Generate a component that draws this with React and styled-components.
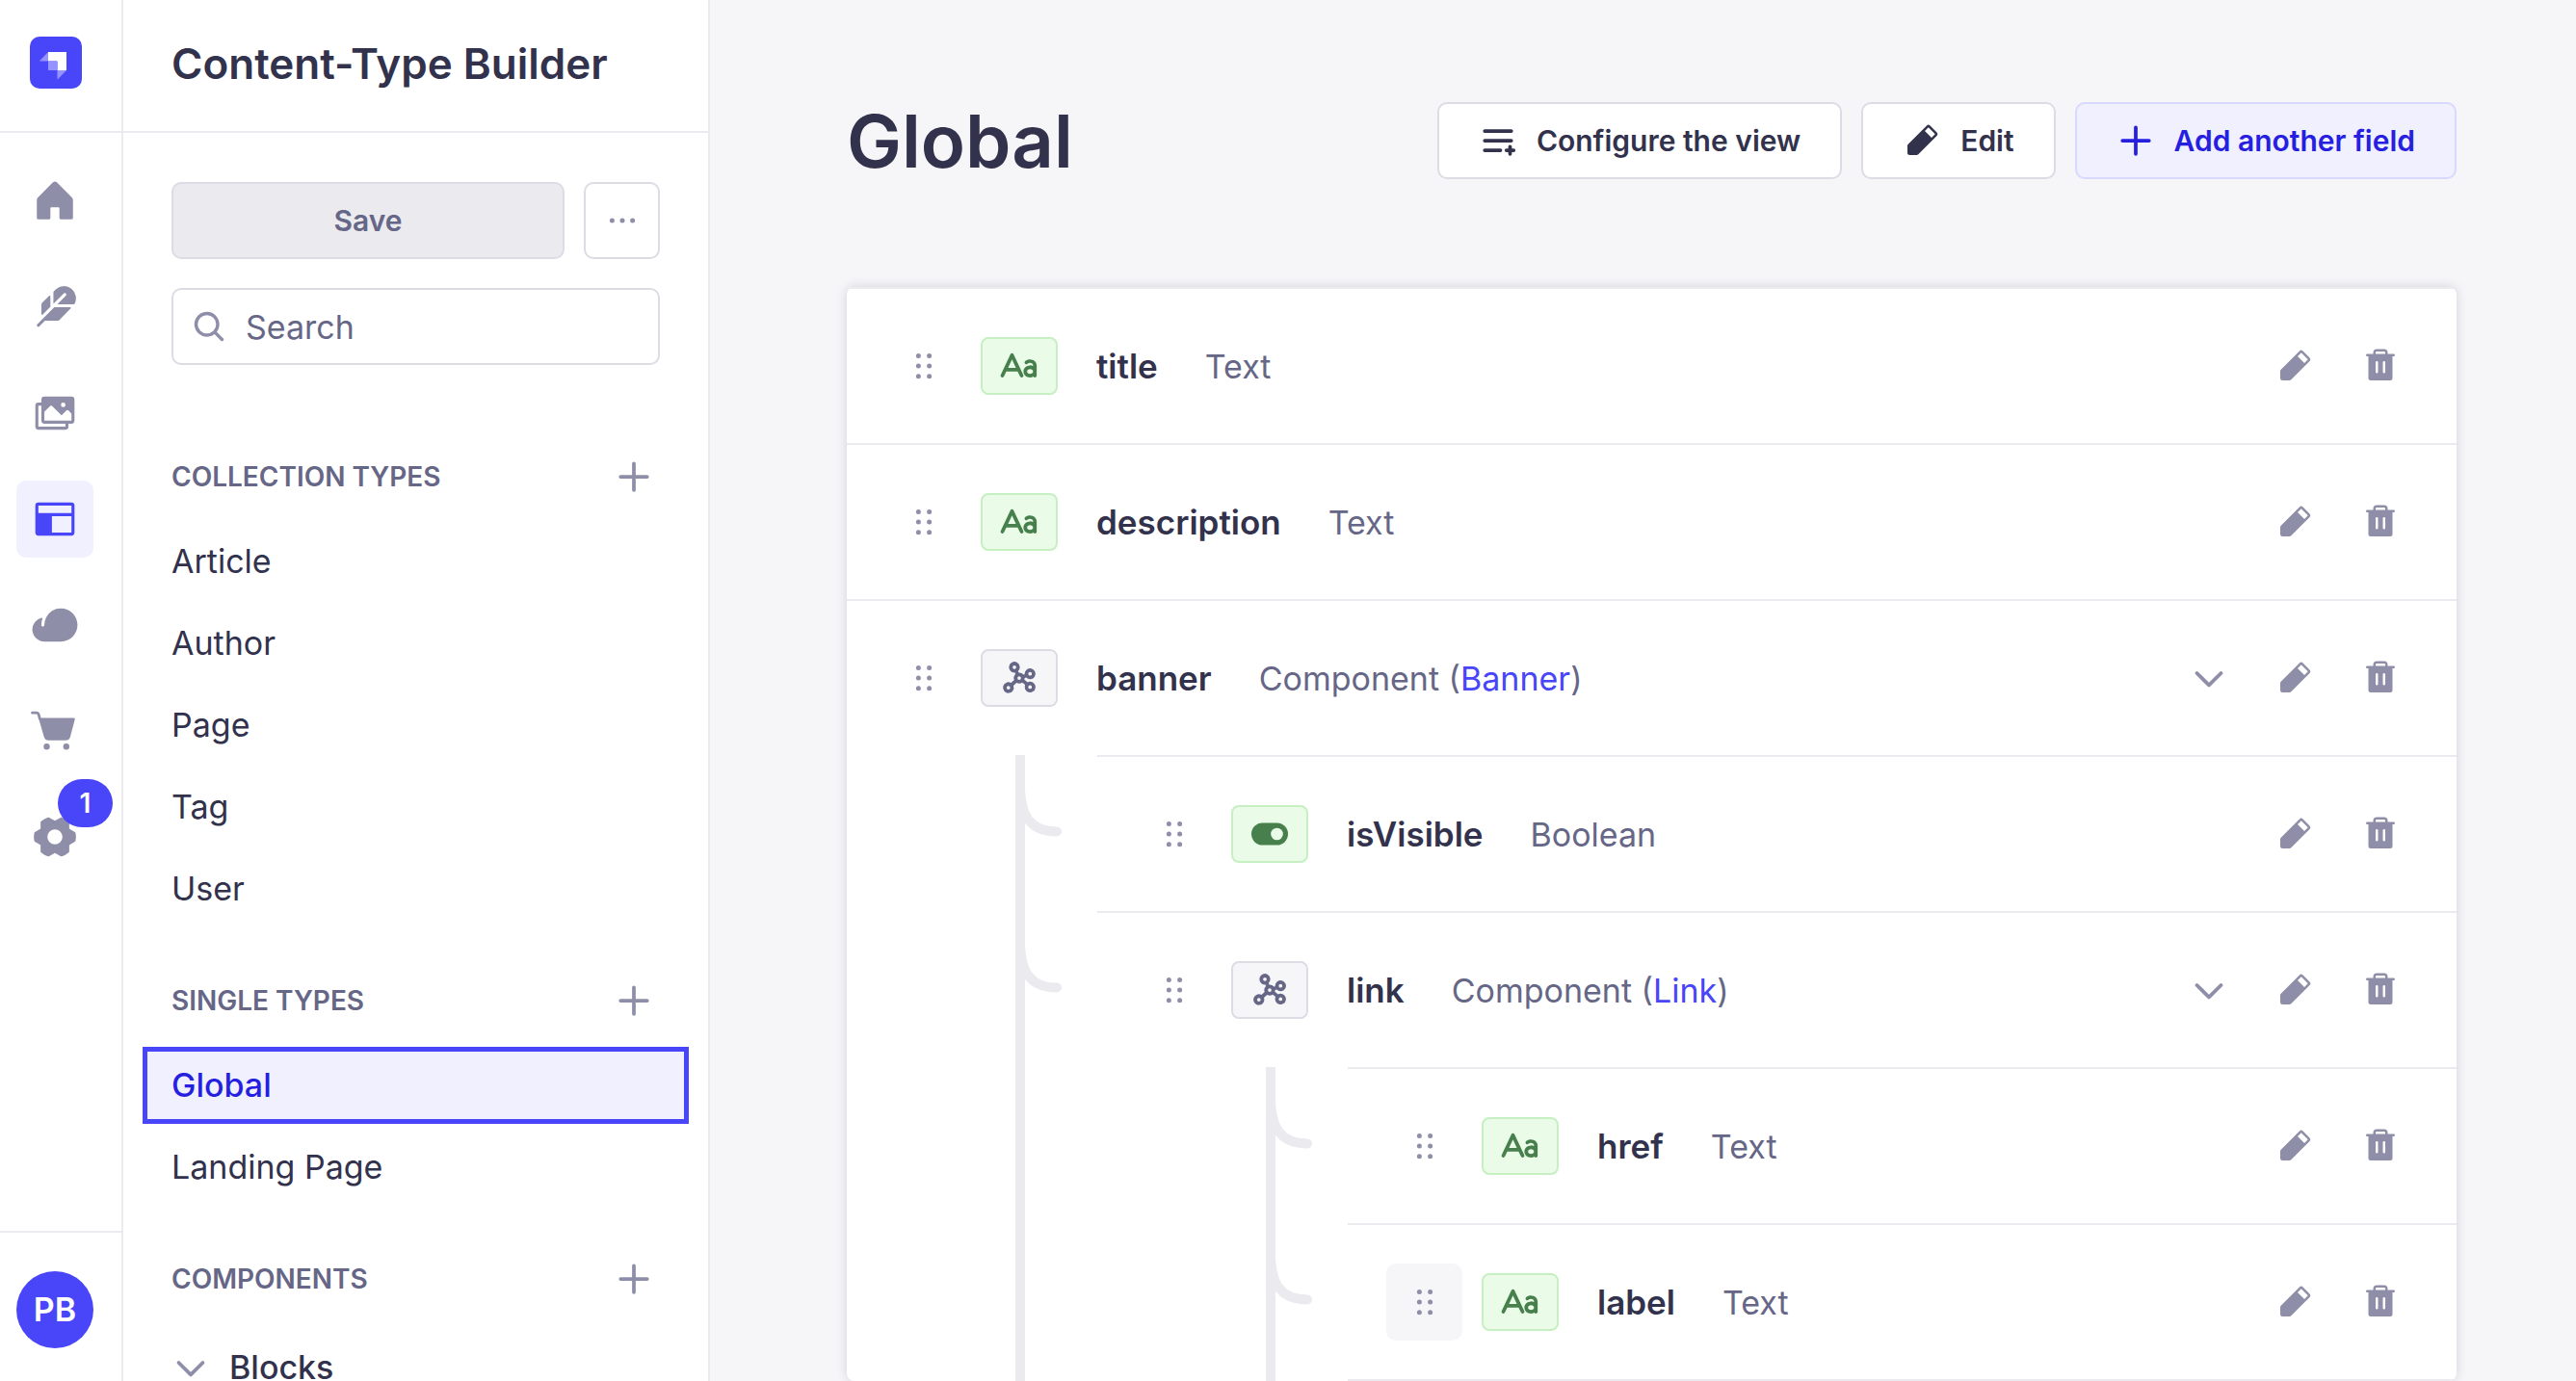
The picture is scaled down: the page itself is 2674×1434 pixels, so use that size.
import React from "react";
import styled, { createGlobalStyle, css } from "styled-components";
import {
  PiCaretDownBold,
  PiCloudFill,
  PiDotsSixVerticalBold,
  PiDotsThreeBold,
  PiFeatherFill,
  PiGearSixFill,
  PiGraphBold,
  PiHouseFill,
  PiImagesFill,
  PiLayoutFill,
  PiListPlusBold,
  PiMagnifyingGlassBold,
  PiPencilSimpleFill,
  PiPlusBold,
  PiTextAaBold,
  PiTrashFill,
} from "react-icons/pi";

const c = {
  white: "#ffffff",
  page: "#f6f6f9",
  line: "#eaeaef",
  outline: "#dcdce4",
  icon: "#8e8ea9",
  muted: "#666687",
  ink: "#32324d",
  primary: "#4945f8",
  primaryDark: "#271fe0",
  primarySoft: "#f0f0ff",
  primaryLine: "#d9d8ff",
  green: "#47804d",
  greenSoft: "#eafbe7",
  greenLine: "#c6f0c2",
};

const GlobalStyle = createGlobalStyle`
  *, *::before, *::after { box-sizing: border-box; }
  body {
    margin: 0;
    background: ${c.page};
    color: ${c.ink};
    font-family: Inter, "Liberation Sans", sans-serif;
    font-size: 34px;
    line-height: 50px;
    -webkit-font-smoothing: antialiased;
  }
  button, input { font: inherit; color: inherit; margin: 0; }
  button { padding: 0; border: 0; background: none; cursor: pointer; }
  a { color: inherit; text-decoration: none; }
  ul { list-style: none; margin: 0; padding: 0; }
  h1, h2, h3, p { margin: 0; }
  svg { display: block; flex: none; }
`;

const Shell = styled.div`
  display: flex;
  height: 100vh;
  overflow: hidden;
`;

/* ---------- Left rail ---------- */

const Rail = styled.nav`
  flex: none;
  width: 128px;
  display: flex;
  flex-direction: column;
  background: ${c.white};
  border-right: 2px solid ${c.line};
`;

const RailBrand = styled.a`
  display: flex;
  height: 138px;
  padding: 38px 0 0 31px;
  border-bottom: 2px solid ${c.line};
`;

const RailList = styled.ul`
  flex: 1;
  display: flex;
  flex-direction: column;
  gap: 30px;
  padding: 31px 0 0 17px;
`;

const RailLink = styled.a`
  position: relative;
  display: flex;
  align-items: center;
  justify-content: center;
  width: 80px;
  height: 80px;
  border-radius: 10px;
  font-size: 50px;
  color: ${(p) => (p.$active ? c.primary : c.icon)};
  background: ${(p) => (p.$active ? c.primarySoft : "transparent")};
`;

const Badge = styled.span`
  position: absolute;
  top: -20px;
  left: 43px;
  width: 57px;
  height: 50px;
  border-radius: 25px;
  background: ${c.primary};
  color: ${c.white};
  font-size: 28px;
  font-weight: 600;
  line-height: 50px;
  text-align: center;
`;

const RailFooter = styled.div`
  padding: 40px 0 34px 17px;
  border-top: 2px solid ${c.line};
`;

const Avatar = styled.button`
  display: block;
  width: 80px;
  height: 80px;
  border-radius: 50%;
  background: ${c.primary};
  color: ${c.white};
  font-weight: 600;
`;

/* ---------- Sidebar ---------- */

const Sidebar = styled.aside`
  flex: none;
  width: 609px;
  display: flex;
  flex-direction: column;
  overflow: hidden;
  background: ${c.white};
  border-right: 2px solid ${c.line};
`;

const SidebarHeader = styled.div`
  flex: none;
  display: flex;
  align-items: center;
  height: 138px;
  padding: 0 50px 4px;
  border-bottom: 2px solid ${c.line};
`;

const SidebarTitle = styled.h2`
  font-size: 44px;
  font-weight: 600;
  line-height: 60px;
  white-space: nowrap;
`;

const SidebarBody = styled.div`
  display: flex;
  flex-direction: column;
  padding: 51px 50px 0;
`;

const SaveRow = styled.div`
  display: flex;
  gap: 20px;
  margin-bottom: 30px;
`;

const boxed = css`
  height: 80px;
  border: 2px solid ${c.outline};
  border-radius: 10px;
  background: ${c.white};
`;

const SaveButton = styled.button`
  ${boxed}
  flex: 1;
  background: ${c.line};
  color: ${c.muted};
  font-size: 30px;
  font-weight: 600;
`;

const MoreButton = styled.button`
  ${boxed}
  width: 79px;
  display: flex;
  align-items: center;
  justify-content: center;
  font-size: 40px;
  color: ${c.icon};
`;

const SearchBox = styled.label`
  ${boxed}
  display: flex;
  align-items: center;
  gap: 20px;
  padding: 0 19px;
  color: ${c.icon};
  font-size: 36px;
`;

const SearchInput = styled.input`
  flex: 1;
  min-width: 0;
  height: 60px;
  padding: 0;
  border: 0;
  outline: 0;
  background: none;
  font-size: 34px;
  color: ${c.ink};
  &::placeholder { color: ${c.muted}; opacity: 1; }
`;

const Sections = styled.div`
  display: flex;
  flex-direction: column;
  gap: 46px;
  padding-top: 86px;
`;

const SectionHead = styled.div`
  display: flex;
  align-items: center;
  justify-content: space-between;
  height: 60px;
  margin-bottom: 18px;
  padding-right: 7px;
`;

const SectionTitle = styled.h3`
  font-size: 28px;
  font-weight: 600;
  line-height: 40px;
  text-transform: uppercase;
  color: ${c.muted};
`;

const IconButton = styled.button`
  display: flex;
  font-size: 40px;
  color: ${c.icon};
`;

const TypeList = styled.ul`
  display: flex;
  flex-direction: column;
  gap: 5px;
  margin: 0 -30px;
`;

const TypeLink = styled.a`
  display: flex;
  align-items: center;
  height: 80px;
  padding: 0 30px;
  ${(p) =>
    p.$active &&
    css`
      background: ${c.primarySoft};
      color: ${c.primaryDark};
      font-weight: 500;
      outline: 5px solid ${c.primary};
      outline-offset: -5px;
    `}
`;

const GroupButton = styled.button`
  display: flex;
  align-items: center;
  gap: 20px;
  height: 88px;
  font-weight: 500;
  line-height: 30px;
  svg { width: 40px; height: 40px; color: ${c.icon}; }
`;

/* ---------- Main ---------- */

const Main = styled.main`
  flex: 1;
  min-width: 0;
  overflow: hidden;
  padding: 106px 124px 0 142px;
`;

const PageHeader = styled.header`
  display: flex;
  align-items: center;
  justify-content: space-between;
  height: 80px;
  margin-bottom: 112px;
`;

const PageTitle = styled.h1`
  font-size: 76px;
  font-weight: 600;
  line-height: 80px;
`;

const Actions = styled.div`
  display: flex;
  gap: 20px;
`;

const ActionButton = styled.button`
  ${boxed}
  display: flex;
  align-items: center;
  gap: 20px;
  padding: 0 41px;
  font-size: 30px;
  font-weight: 600;
  white-space: nowrap;
  svg { width: 40px; height: 40px; }
  ${(p) =>
    p.$primary &&
    css`
      background: ${c.primarySoft};
      border-color: ${c.primaryLine};
      color: ${c.primaryDark};
    `}
`;

const Panel = styled.div`
  border-radius: 8px;
  background: ${c.white};
  box-shadow: 0 0 12px rgba(33, 33, 52, 0.16);
`;

const Row = styled.div`
  display: flex;
  align-items: center;
  height: 162px;
  padding: 0 40px;
  border-top: 2px solid ${c.line};
`;

const FieldList = styled.ul`
  border-radius: 8px;
  overflow: hidden;
`;

const DragHandle = styled.button`
  display: flex;
  align-items: center;
  justify-content: center;
  width: 79px;
  height: 80px;
  margin-right: 20px;
  border-radius: 10px;
  font-size: 40px;
  color: ${c.icon};
  background: ${(p) => (p.$hovered ? c.page : "transparent")};
`;

const Tile = styled.span`
  display: flex;
  align-items: center;
  justify-content: center;
  width: 80px;
  height: 60px;
  margin-right: 40px;
  border: 2px solid ${(p) => (p.$green ? c.greenLine : c.outline)};
  border-radius: 8px;
  font-size: 40px;
  color: ${(p) => (p.$green ? c.green : c.muted)};
  background: ${(p) => (p.$green ? c.greenSoft : c.page)};
`;

const FieldText = styled.div`
  flex: 1;
  display: flex;
  align-items: baseline;
  gap: 49px;
`;

const FieldName = styled.span`
  font-size: 35px;
  font-weight: 600;
`;

const FieldType = styled.span`
  color: ${c.muted};
  a { color: ${c.primary}; }
`;

const RowActions = styled.div`
  display: flex;
  gap: 10px;
`;

const RowAction = styled.button`
  display: flex;
  align-items: center;
  justify-content: center;
  width: 79px;
  height: 80px;
  font-size: 40px;
  color: ${c.icon};
`;

const NestedItem = styled.li`
  display: flex;
`;

const Branch = styled.div`
  flex: none;
  width: 85px;
  margin-left: 175px;
  border-left: 10px solid ${c.line};
`;

const NestedContent = styled.div`
  flex: 1;
  min-width: 0;
`;

const ClosingLine = styled.div`
  border-bottom: 2px solid ${c.line};
`;

const Logo = () => (
  <svg width="54" height="54" viewBox="0 0 54 54" aria-hidden="true">
    <rect width="54" height="54" rx="10" fill={c.primary} />
    <path d="M19 16h18.5a.5.5 0 0 1 .5.5V35h-9.500V26a.5.5 0 0 0-.5-.5h-9z" fill="#fff" />
    <path d="M19 25.500h9a.5.5 0 0 1 .5.5v9h-9a.5.5 0 0 1-.5-.5z" fill="#9593ff" />
    <path d="M19 16v9.500h-8.600a.3.3 0 0 1-.2-.5z" fill="#9593ff" />
    <path d="M28.500 35H38l-9 9.200a.3.3 0 0 1-.5-.2z" fill="#9593ff" />
  </svg>
);

/* Solid basket with two loose wheels */
const CartIcon = () => (
  <svg width="50" height="50" viewBox="0 0 50 50" aria-hidden="true">
    <path
      d="M1.500 6.200h4.200a2.600 2.600 0 0 1 2.500 1.900L9.400 12.500"
      fill="none"
      stroke="currentColor"
      strokeWidth="2.800"
      strokeLinecap="round"
    />
    <path
      d="M8 11.500h36.300a1.400 1.400 0 0 1 1.300 1.900L40.900 31.200a5 5 0 0 1-4.800 3.600H18.500a5 5 0 0 1-4.800-3.600z"
      fill="currentColor"
    />
    <circle cx="16.500" cy="41.200" r="3.200" fill="currentColor" />
    <circle cx="36.800" cy="41.200" r="3.200" fill="currentColor" />
  </svg>
);

const ToggleIcon = () => (
  <svg width="38" height="24" viewBox="0 0 38 24" aria-hidden="true">
    <rect y=".5" width="38" height="23" rx="11.500" fill="currentColor" />
    <circle cx="26.500" cy="12" r="6.300" fill={c.greenSoft} />
  </svg>
);

const BranchCurve = () => (
  <svg width="50" height="90" viewBox="0 0 50 90" aria-hidden="true">
    <path
      d="M-5 31C-5 64 6 79.500 33 79.500"
      fill="none"
      stroke={c.line}
      strokeWidth="10"
      strokeLinecap="round"
    />
  </svg>
);

const railItems = [
  { label: "Home", icon: PiHouseFill },
  { label: "Content Manager", icon: PiFeatherFill },
  { label: "Media Library", icon: PiImagesFill },
  { label: "Content-Type Builder", icon: PiLayoutFill, active: true },
  { label: "Deploy", icon: PiCloudFill },
  { label: "Marketplace", icon: CartIcon },
  { label: "Settings", icon: PiGearSixFill, badge: 1 },
];

const sections = [
  { title: "Collection Types", items: ["Article", "Author", "Page", "Tag", "User"] },
  { title: "Single Types", items: ["Global", "Landing Page"] },
];

const fields = [
  { name: "title", type: "Text" },
  { name: "description", type: "Text" },
  {
    name: "banner",
    type: "Component",
    target: "Banner",
    children: [
      { name: "isVisible", type: "Boolean" },
      {
        name: "link",
        type: "Component",
        target: "Link",
        children: [
          { name: "href", type: "Text" },
          { name: "label", type: "Text", hovered: true },
        ],
      },
    ],
  },
];

const typeIcons = {
  Text: PiTextAaBold,
  Boolean: ToggleIcon,
  Component: PiGraphBold,
};

function FieldRow({ field }) {
  const Icon = typeIcons[field.type];
  return (
    <Row>
      <DragHandle type="button" aria-label={`Move ${field.name}`} $hovered={field.hovered}>
        <PiDotsSixVerticalBold />
      </DragHandle>
      <Tile $green={field.type !== "Component"}>
        <Icon />
      </Tile>
      <FieldText>
        <FieldName>{field.name}</FieldName>
        <FieldType>
          {field.type}
          {field.target && (
            <>
              {" ("}
              <a href={`#${field.target}`}>{field.target}</a>)
            </>
          )}
        </FieldType>
      </FieldText>
      <RowActions>
        {field.children && (
          <RowAction type="button" aria-label={`Collapse ${field.name}`}>
            <PiCaretDownBold />
          </RowAction>
        )}
        <RowAction type="button" aria-label={`Edit ${field.name}`}>
          <PiPencilSimpleFill />
        </RowAction>
        <RowAction type="button" aria-label={`Delete ${field.name}`}>
          <PiTrashFill />
        </RowAction>
      </RowActions>
    </Row>
  );
}

function NestedFields({ items }) {
  return (
    <ul>
      {items.map((item, i) => (
        <NestedItem key={item.name}>
          <Branch>
            <BranchCurve />
          </Branch>
          <NestedContent>
            <FieldRow field={item} />
            {item.children && <NestedFields items={item.children} />}
            {!item.children && i === items.length - 1 && <ClosingLine />}
          </NestedContent>
        </NestedItem>
      ))}
    </ul>
  );
}

export default function App() {
  return (
    <Shell>
      <GlobalStyle />
      <Rail aria-label="Main">
        <RailBrand href="#home" aria-label="Dashboard">
          <Logo />
        </RailBrand>
        <RailList>
          {railItems.map(({ label, icon: Icon, active, badge }) => (
            <li key={label}>
              <RailLink href="#" aria-label={label} $active={active}>
                <Icon />
                {badge && <Badge>{badge}</Badge>}
              </RailLink>
            </li>
          ))}
        </RailList>
        <RailFooter>
          <Avatar type="button">PB</Avatar>
        </RailFooter>
      </Rail>

      <Sidebar>
        <SidebarHeader>
          <SidebarTitle>Content-Type Builder</SidebarTitle>
        </SidebarHeader>
        <SidebarBody>
          <SaveRow>
            <SaveButton type="button" disabled>
              Save
            </SaveButton>
            <MoreButton type="button" aria-label="More actions">
              <PiDotsThreeBold />
            </MoreButton>
          </SaveRow>
          <SearchBox>
            <PiMagnifyingGlassBold />
            <SearchInput type="text" placeholder="Search" aria-label="Search" />
          </SearchBox>
          <Sections>
            {sections.map((section) => (
              <section key={section.title}>
                <SectionHead>
                  <SectionTitle>{section.title}</SectionTitle>
                  <IconButton type="button" aria-label={`Add to ${section.title}`}>
                    <PiPlusBold />
                  </IconButton>
                </SectionHead>
                <TypeList>
                  {section.items.map((item) => (
                    <li key={item}>
                      <TypeLink href={`#${item}`} $active={item === "Global"}>
                        {item}
                      </TypeLink>
                    </li>
                  ))}
                </TypeList>
              </section>
            ))}
            <section>
              <SectionHead>
                <SectionTitle>Components</SectionTitle>
                <IconButton type="button" aria-label="Add a component">
                  <PiPlusBold />
                </IconButton>
              </SectionHead>
              <GroupButton type="button">
                <PiCaretDownBold />
                Blocks
              </GroupButton>
            </section>
          </Sections>
        </SidebarBody>
      </Sidebar>

      <Main>
        <PageHeader>
          <PageTitle>Global</PageTitle>
          <Actions>
            <ActionButton type="button">
              <PiListPlusBold />
              Configure the view
            </ActionButton>
            <ActionButton type="button">
              <PiPencilSimpleFill />
              Edit
            </ActionButton>
            <ActionButton type="button" $primary>
              <PiPlusBold />
              Add another field
            </ActionButton>
          </Actions>
        </PageHeader>
        <Panel>
          <FieldList>
            {fields.map((field) => (
              <li key={field.name}>
                <FieldRow field={field} />
                {field.children && <NestedFields items={field.children} />}
              </li>
            ))}
          </FieldList>
        </Panel>
      </Main>
    </Shell>
  );
}
